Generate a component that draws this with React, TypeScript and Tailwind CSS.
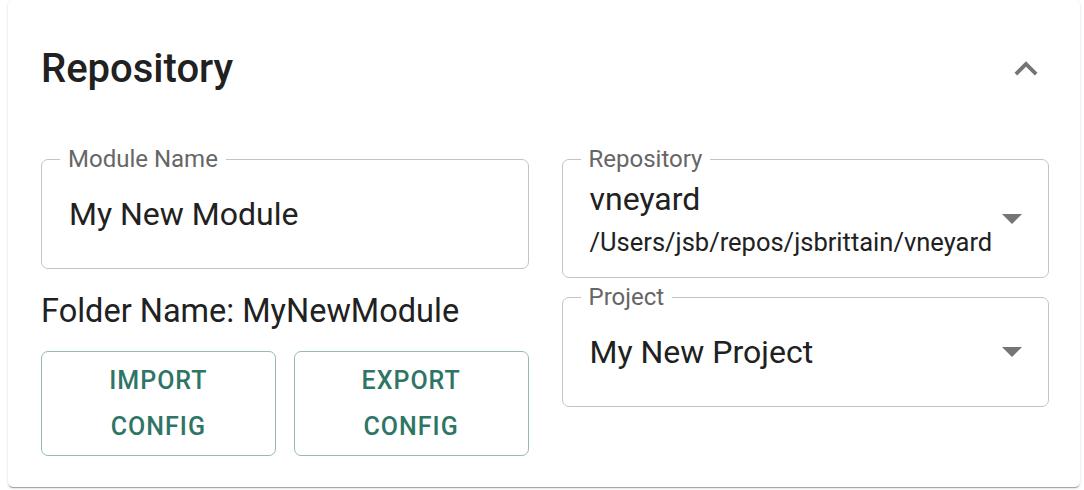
import React from 'react'

const ChevronUp = () => (
  <svg width="46" height="46" viewBox="0 0 24 24" fill="#757575">
    <path d="M12 8l-6 6 1.41 1.41L12 10.83l4.59 4.58L18 14z" />
  </svg>
)

const DropArrow = () => (
  <svg width="20" height="10" viewBox="0 0 20 10" fill="#757575">
    <polygon points="0,0 20,0 10,10" />
  </svg>
)

type FieldProps = {
  label: string
  children: React.ReactNode
  className?: string
}

const Field = ({ label, children, className }: FieldProps) => (
  <fieldset className={`rounded-[7px] border border-[#c4c4c4] ${className ?? ''}`}>
    <legend className="ml-[18px] px-[8px] text-[24px] leading-[20px] text-[#666666]">{label}</legend>
    {children}
  </fieldset>
)

export default function App() {
  return (
    <div className="h-[490px] overflow-hidden bg-white pl-[8px] pr-[4px] font-['Roboto',sans-serif]">
      <div className="h-[487px] rounded-[5px] bg-white pt-[45px] pr-[31px] pl-[33px] shadow-[0px_2px_1px_-1px_rgba(0,0,0,0.2),0px_1px_1px_0px_rgba(0,0,0,0.14),0px_1px_3px_0px_rgba(0,0,0,0.12)]">
        <div className="flex h-[48px] items-center justify-between">
          <h2 className="text-[40px] leading-[48px] font-medium text-[#212121]">Repository</h2>
          <ChevronUp />
        </div>

        <div className="mt-[56px] grid grid-cols-2 gap-x-[33px]">
          <div className="flex flex-col">
            <Field label="Module Name">
              <div className="flex h-[99px] items-center pb-[9px] pl-[27px] text-[32px] leading-[36px] text-[#212121]">
                My New Module
              </div>
            </Field>
            <p className="mt-[24px] text-[32.5px] leading-[36px] text-[#212121]">Folder Name: MyNewModule</p>
            <div className="mt-[22px] grid grid-cols-2 gap-x-[18px]">
              {['IMPORT', 'EXPORT'].map((w) => (
                <button
                  key={w}
                  className="flex h-[105px] flex-col items-center justify-center rounded-[7px] border-[1.5px] border-[#93bcb2] text-[25px] leading-[46px] font-medium tracking-[0.04em] text-[#2e7566]"
                >
                  <span>{w}</span>
                  <span>CONFIG</span>
                </button>
              ))}
            </div>
          </div>

          <div className="flex flex-col">
            <Field label="Repository">
              <div className="flex h-[108px] justify-between pl-[27px] pr-[26px]">
                <div className="flex flex-col pt-[11px] text-[#212121]">
                  <span className="text-[32px] leading-[38px]">vneyard</span>
                  <span className="mt-[6px] text-[25.5px] leading-[36px]">/Users/jsb/repos/jsbrittain/vneyard</span>
                </div>
                <div className="flex items-center pb-[9px]">
                  <DropArrow />
                </div>
              </div>
            </Field>
            <Field label="Project" className="mt-[9px]">
              <div className="flex h-[99px] items-center justify-between pb-[9px] pl-[27px] pr-[26px]">
                <span className="text-[32px] leading-[36px] text-[#212121]">My New Project</span>
                <DropArrow />
              </div>
            </Field>
          </div>
        </div>
      </div>
    </div>
  )
}
